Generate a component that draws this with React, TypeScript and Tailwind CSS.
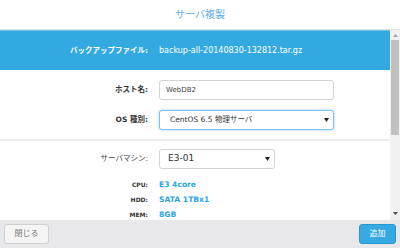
const font = '"DejaVu Sans", Verdana, "Noto Sans CJK JP", sans-serif';

const SelectBox = ({ value, width, focused, textClass }: { value: string; width: string; focused?: boolean; textClass: string }) => (
  <div
    className={`${width} h-[20px] flex items-center justify-between rounded-[3px] bg-white border ${
      focused ? 'border-[#7fc1ea] shadow-[0_0_3px_rgba(80,170,230,0.6)]' : 'border-[#d4d4d4]'
    }`}
  >
    <span className={textClass}>{value}</span>
    <svg width="5" height="4" viewBox="0 0 5 4" className="mr-[4px]">
      <path d="M0 0h5L2.5 4z" fill="#222" />
    </svg>
  </div>
);

const specs = [
  { label: 'CPU:', value: 'E3 4core' },
  { label: 'HDD:', value: 'SATA 1TBx1' },
  { label: 'MEM:', value: '8GB' },
];

export default function App() {
  return (
    <div className="w-[400px] h-[248px] flex flex-col bg-white overflow-hidden" style={{ fontFamily: font }}>
      <div className="h-[30px] shrink-0 flex items-center justify-center border-b border-[#e2e2e2]">
        <span className="text-[10px] text-[#5aafe2]">サーバ複製</span>
      </div>

      <div className="flex-1 flex min-h-0">
        <div className="flex-1 overflow-hidden">
          <div className="h-[40px] bg-[#33a9e2] border-t border-[#6cc0ea] grid grid-cols-[148px_1fr] gap-x-[11px] items-center">
            <span className="text-right text-[7.5px] font-bold text-white">バックアップファイル:</span>
            <span className="text-[8px] text-white">backup-all-20140830-132812.tar.gz</span>
          </div>

          <div className="pt-[10px] pb-[9px] grid grid-cols-[148px_175px] gap-x-[11px] gap-y-[10px] items-center border-b-2 border-[#eeeeee]">
            <span className="text-right text-[7.5px] font-bold text-[#333]">ホスト名:</span>
            <div className="h-[20px] flex items-center rounded-[3px] border border-[#d4d4d4] px-[6px]">
              <span className="text-[7px] text-[#444]">WebDB2</span>
            </div>
            <span className="text-right text-[7.5px] font-bold text-[#333]">OS 種別:</span>
            <SelectBox value="CentOS 6.5 物理サーバ" width="w-[175px]" focused textClass="pl-[10px] text-[7.5px] text-[#333]" />
          </div>

          <div className="pt-[8px] grid grid-cols-[148px_116px] gap-x-[11px] items-center">
            <span className="text-right text-[7.5px] text-[#444]">サーバマシン:</span>
            <SelectBox value="E3-01" width="w-[116px]" textClass="pl-[8px] text-[9px] text-[#333]" />
          </div>

          <div className="pt-[8px] grid grid-cols-[148px_1fr] gap-x-[11px]">
            {specs.map((s) => (
              <div key={s.label} className="contents">
                <span className="h-[15px] flex items-center justify-end text-[6px] font-bold text-[#333]">{s.label}</span>
                <span className="h-[15px] flex items-center text-[7.6px] font-bold text-[#2ea4e2]">{s.value}</span>
              </div>
            ))}
          </div>
        </div>

        <div className="w-[10px] shrink-0 bg-[#f1f1f1] flex flex-col items-center pb-[2px]">
          <div className="h-[10px] flex items-center">
            <svg width="5" height="3" viewBox="0 0 5 3"><path d="M2.5 0L5 3H0z" fill="#a3a3a3" /></svg>
          </div>
          <div className="w-[8px] h-[95px] bg-[#c1c1c1]" />
          <div className="flex-1" />
          <div className="h-[10px] flex items-center">
            <svg width="5" height="3" viewBox="0 0 5 3"><path d="M0 0h5L2.5 3z" fill="#505050" /></svg>
          </div>
        </div>
      </div>

      <div className="h-[28px] shrink-0 bg-[#e8e8ea] flex items-center justify-between px-[4px]">
        <button className="w-[45px] h-[20px] rounded-[3px] border border-[#cfcfcf] bg-[#f5f5f5] text-[8px] text-[#777]">
          閉じる
        </button>
        <button className="w-[37px] h-[20px] rounded-[3px] border border-[#2b97d0] bg-[#35aae2] text-[8px] text-white">
          追加
        </button>
      </div>
    </div>
  );
}
